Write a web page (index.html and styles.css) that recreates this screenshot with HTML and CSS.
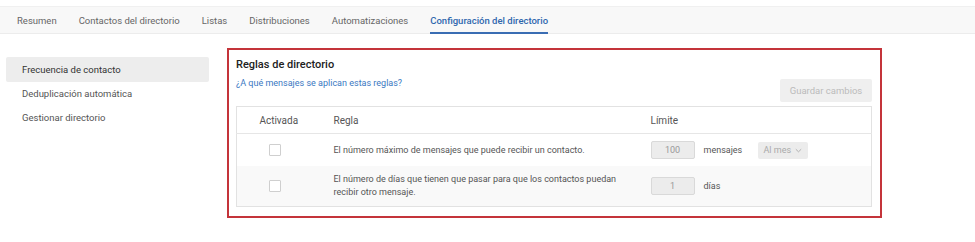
FILE: index.html
```html
<!DOCTYPE html>
<html lang="es">
<head>
    <meta charset="UTF-8">
    <meta name="viewport" content="width=device-width, initial-scale=1.0">
    <title>Configuración del directorio</title>
    <link rel="stylesheet" href="styles.css">
</head>
<body>

    <div class="tabs">
        <a class="tab">Resumen</a>
        <a class="tab">Contactos del directorio</a>
        <a class="tab">Listas</a>
        <a class="tab">Distribuciones</a>
        <a class="tab">Automatizaciones</a>
        <a class="tab active">Configuración del directorio</a>
    </div>

    <div class="main">
        <div class="sidebar">
            <div class="side-item active">Frecuencia de contacto</div>
            <div class="side-item">Deduplicación automática</div>
            <div class="side-item">Gestionar directorio</div>
        </div>

        <div class="card">
            <div class="card-title">Reglas de directorio</div>
            <div class="card-row">
                <a class="help-link">¿A qué mensajes se aplican estas reglas?</a>
                <button class="save-btn" disabled>Guardar cambios</button>
            </div>

            <table class="rules">
                <colgroup>
                    <col class="col-on">
                    <col class="col-rule">
                    <col>
                </colgroup>
                <thead>
                    <tr>
                        <th class="center">Activada</th>
                        <th>Regla</th>
                        <th>Límite</th>
                    </tr>
                </thead>
                <tbody>
                    <tr class="row-short">
                        <td class="center"><span class="check"></span></td>
                        <td>El número máximo de mensajes que puede recibir un contacto.</td>
                        <td>
                            <div class="limit">
                                <span class="num-box">100</span>
                                <span class="unit">mensajes</span>
                                <span class="select">Al mes
                                    <svg width="7" height="5" viewBox="0 0 7 5"><path d="M0.8 1.2 L3.5 3.8 L6.2 1.2" fill="none" stroke="#aaa" stroke-width="0.9"/></svg>
                                </span>
                            </div>
                        </td>
                    </tr>
                    <tr class="row-alt">
                        <td class="center"><span class="check"></span></td>
                        <td>El número de días que tienen que pasar para que los contactos puedan recibir otro mensaje.</td>
                        <td>
                            <div class="limit">
                                <span class="num-box">1</span>
                                <span class="unit">días</span>
                            </div>
                        </td>
                    </tr>
                </tbody>
            </table>
        </div>
    </div>

</body>
</html>
```

FILE: styles.css
```css
body {
    font-family: Roboto, "Liberation Sans", Arial, sans-serif;
    font-size: 10px;
    color: #555;
    background-color: #fff;
    margin: 0;
}

.tabs {
    display: flex;
    gap: 22px;
    margin-top: 6px;
    padding-left: 17px;
    height: 26px;
    background: #f8f8f8;
    border-top: 1px solid #f0f0f0;
    border-bottom: 1px solid #ececec;
}

.tab {
    display: block;
    font-size: 9.5px;
    line-height: 26px;
    padding-top: 1px;
    color: #666;
    box-sizing: border-box;
    height: 27px;
}

.tab.active {
    color: #2f67ae;
    font-weight: 500;
    border-bottom: 2px solid #3a6db3;
}

.main {
    display: flex;
    align-items: flex-start;
    padding-top: 14px;
}

.sidebar {
    width: 203px;
    margin-left: 6px;
    margin-top: 9px;
}

.side-item {
    height: 24px;
    line-height: 24px;
    padding-left: 16px;
    font-size: 9.5px;
    color: #555;
    border-radius: 2px;
}

.side-item.active {
    height: 25px;
    line-height: 25px;
    background: #ededed;
    color: #333;
}

.card {
    margin-left: 18px;
    border: 2px solid #c4343a;
    padding: 8px 8px 9px 7px;
    box-sizing: border-box;
    width: 655px;
}

.card-title {
    font-size: 11px;
    font-weight: 500;
    color: #222;
    line-height: 14px;
}

.card-row {
    display: flex;
    justify-content: space-between;
    align-items: flex-start;
    margin-top: 5px;
}

.help-link {
    color: #3a78c2;
    font-size: 9px;
    line-height: 13px;
}

.save-btn {
    margin-top: 2px;
    width: 92px;
    height: 23px;
    border: none;
    border-radius: 2px;
    background: #efefef;
    color: #bbb;
    font-family: inherit;
    font-size: 9.5px;
    padding: 0;
}

.rules {
    width: 100%;
    margin-top: 4px;
    border-collapse: collapse;
    border: 1px solid #e2e2e2;
    table-layout: fixed;
}

.col-on {
    width: 84px;
}

.col-rule {
    width: 320px;
}

.rules th {
    font-weight: normal;
    color: #555;
    text-align: left;
    height: 26px;
    padding: 0 0 0 10px;
    border-bottom: 1px solid #e6e6e6;
}

.rules td {
    font-size: 9px;
    color: #555;
    line-height: 13px;
    padding: 0 20px 0 10px;
    vertical-align: middle;
}

.rules th.center, .rules td.center {
    text-align: center;
    padding: 0;
}

.rules th:nth-child(2), .rules td:nth-child(2) {
    padding-left: 13px;
}

.row-short td {
    height: 32px;
}

.row-alt td {
    height: 40px;
    background: #f9f9f9;
}

.check {
    display: inline-block;
    width: 10px;
    height: 10px;
    border: 1px solid #cfcfcf;
    border-radius: 1px;
    background: #fff;
    vertical-align: middle;
    margin-right: 8px;
}

.limit {
    display: flex;
    align-items: center;
}

.num-box {
    width: 42px;
    height: 16px;
    line-height: 16px;
    text-align: center;
    background: #ececec;
    border: 1px solid #d9d9d9;
    border-radius: 2px;
    color: #999;
}

.unit {
    margin-left: 9px;
    width: 54px;
    color: #555;
}

.select {
    display: flex;
    align-items: center;
    gap: 4px;
    height: 17px;
    padding: 0 6px;
    background: #ececec;
    border-radius: 2px;
    color: #aaa;
}
```
